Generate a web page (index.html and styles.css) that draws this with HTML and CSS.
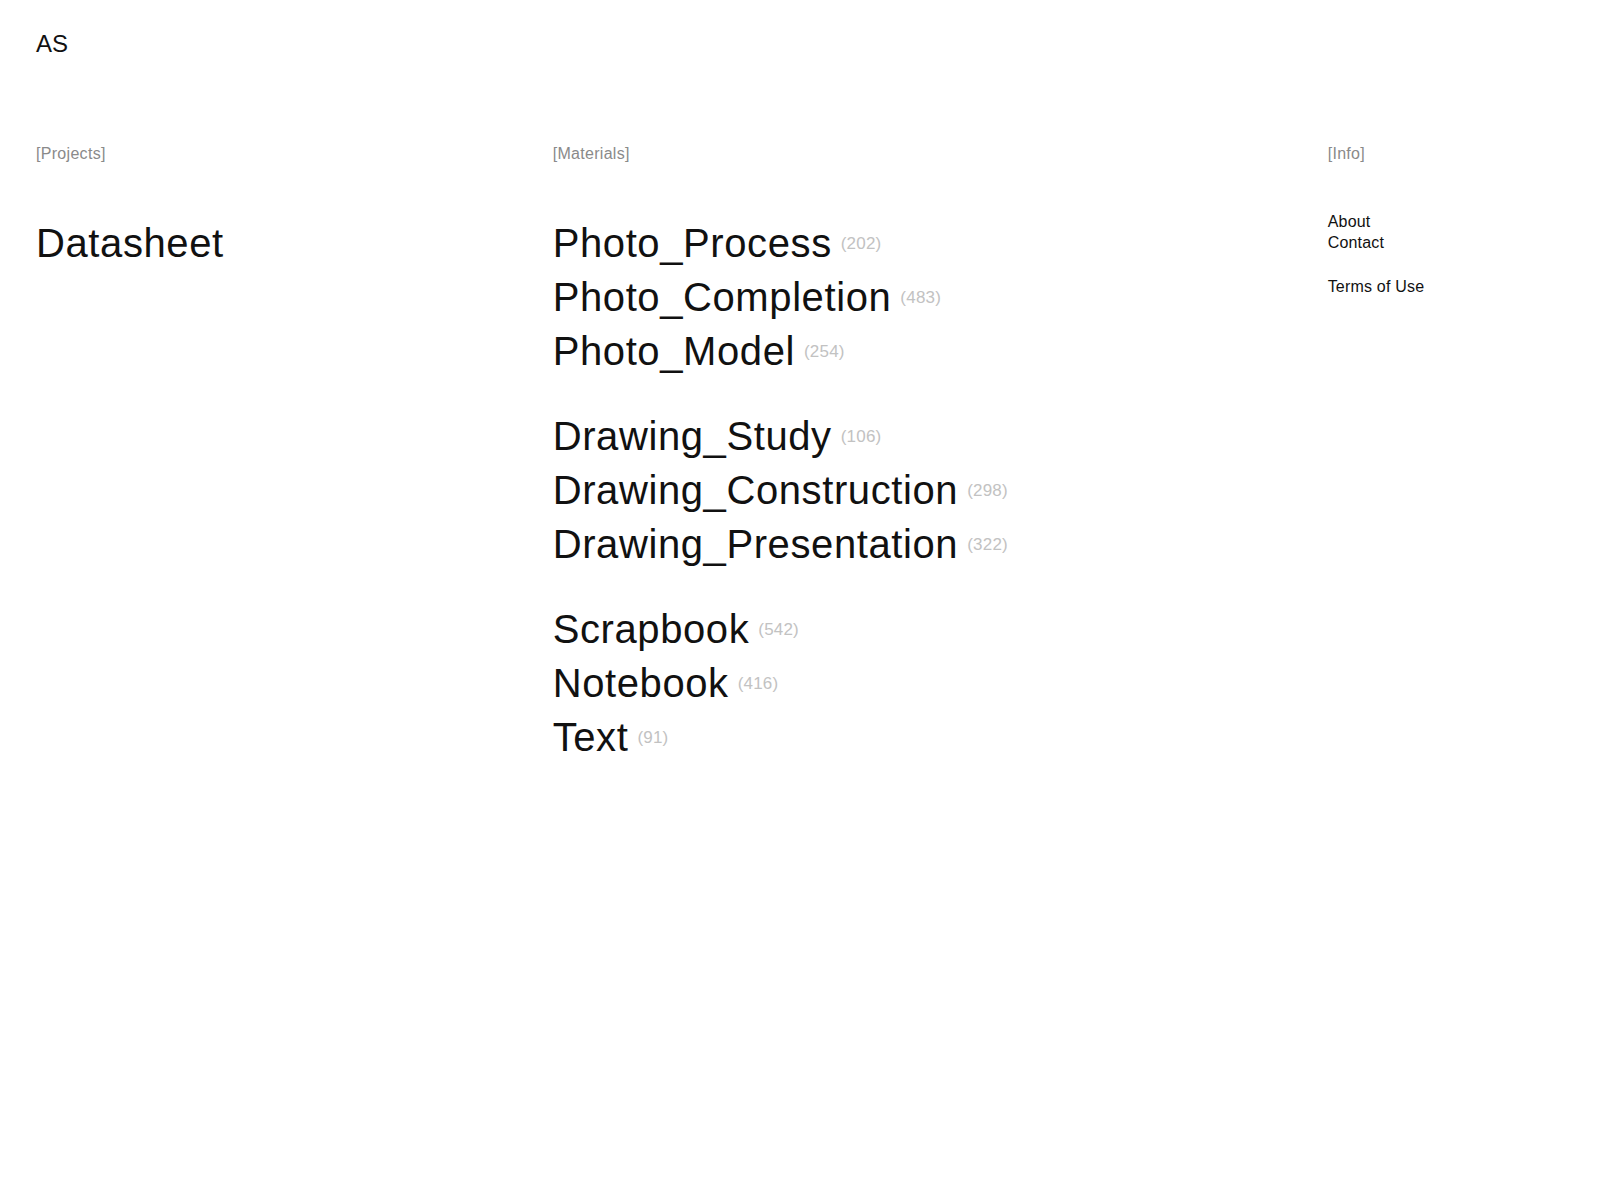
FILE: index.html
```html
<!DOCTYPE html>
<html lang="en">
<head>
<meta charset="utf-8">
<title>AS</title>
<link rel="stylesheet" href="styles.css">
</head>
<body>
<div class="page">
  <header class="site-header">
    <a class="logo" href="#">AS</a>
  </header>
  <main class="columns">
    <section class="col col-projects">
      <h2 class="label">[Projects]</h2>
      <ul class="big-list">
        <li><a href="#">Datasheet</a></li>
      </ul>
    </section>
    <section class="col col-materials">
      <h2 class="label">[Materials]</h2>
      <ul class="big-list">
        <li><a href="#">Photo_Process</a><span class="count">(202)</span></li>
        <li><a href="#">Photo_Completion</a><span class="count">(483)</span></li>
        <li><a href="#">Photo_Model</a><span class="count">(254)</span></li>
      </ul>
      <ul class="big-list group">
        <li><a href="#">Drawing_Study</a><span class="count">(106)</span></li>
        <li><a href="#">Drawing_Construction</a><span class="count">(298)</span></li>
        <li><a href="#">Drawing_Presentation</a><span class="count">(322)</span></li>
      </ul>
      <ul class="big-list group">
        <li><a href="#">Scrapbook</a><span class="count">(542)</span></li>
        <li><a href="#">Notebook</a><span class="count">(416)</span></li>
        <li><a href="#">Text</a><span class="count">(91)</span></li>
      </ul>
    </section>
    <section class="col col-info">
      <h2 class="label">[Info]</h2>
      <ul class="small-list">
        <li><a href="#">About</a></li>
        <li><a href="#">Contact</a></li>
      </ul>
      <ul class="small-list small-group">
        <li><a href="#">Terms of Use</a></li>
      </ul>
    </section>
  </main>
</div>
</body>
</html>
```
FILE: styles.css
```css
* {
  box-sizing: border-box;
}

html, body {
  margin: 0;
  padding: 0;
  background: #ffffff;
}

body {
  font-family: "Liberation Sans", Arial, sans-serif;
  color: #111111;
}

a {
  color: inherit;
  text-decoration: none;
}

ul {
  list-style: none;
  margin: 0;
  padding: 0;
}

.page {
  padding: 32px 36px 0 36px;
}

.site-header {
  height: 24px;
}

.logo {
  display: block;
  font-size: 24px;
  line-height: 24px;
}

.columns {
  display: grid;
  grid-template-columns: repeat(6, 1fr);
  column-gap: 22px;
  margin-top: 88px;
}

.col-projects {
  grid-column: 1 / span 2;
}

.col-materials {
  grid-column: 3 / span 3;
}

.col-info {
  grid-column: 6 / span 1;
}

.label {
  margin: 0;
  font-size: 16px;
  line-height: 20px;
  font-weight: normal;
  letter-spacing: 0.3px;
  color: #8a8a8a;
}

.big-list {
  font-size: 40px;
  line-height: 54px;
  letter-spacing: 0.6px;
}

.big-list li {
  height: 54px;
}

.col-projects .big-list,
.col-materials .big-list:first-of-type {
  margin-top: 52px;
}

.big-list.group {
  margin-top: 31px;
}

.count {
  margin-left: 9px;
  font-size: 17px;
  line-height: 0;
  letter-spacing: 0.2px;
  color: #c2c2c2;
  vertical-align: 8px;
}

.small-list {
  font-size: 16px;
  line-height: 21px;
  letter-spacing: 0.2px;
}

.col-info .small-list:first-of-type {
  margin-top: 47px;
}

.small-list.small-group {
  margin-top: 23px;
}
```
